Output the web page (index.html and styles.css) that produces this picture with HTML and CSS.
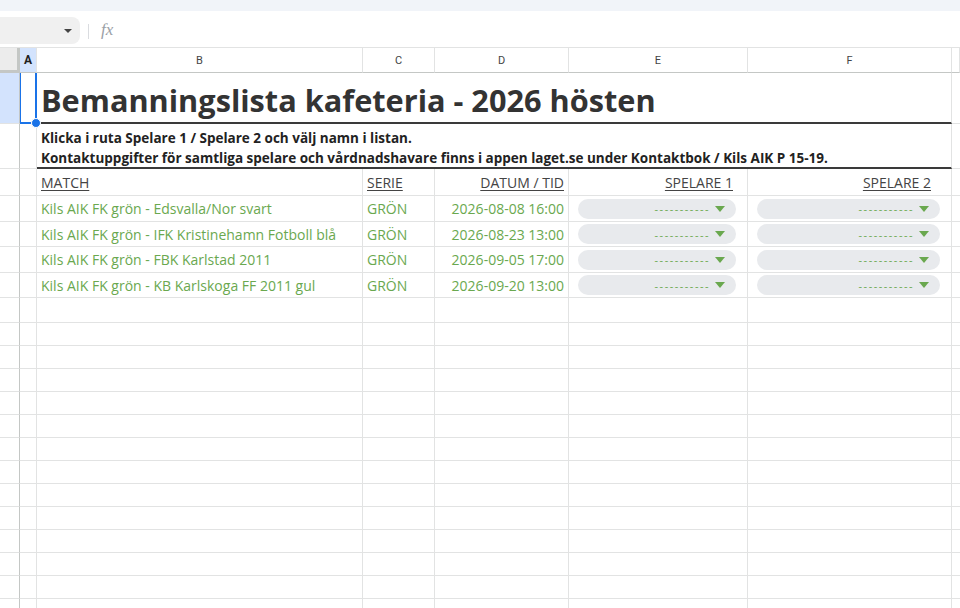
FILE: index.html
```html
<!DOCTYPE html>
<html lang="sv">
  <head>
    <meta charset="utf-8" />
    <title>Bemanningslista kafeteria</title>
    <link rel="stylesheet" href="styles.css">
  </head>

  <body>
    <div class="top_band"></div>

    <div class="formula_bar">
      <div class="name_box"><span class="name_caret"></span></div>
      <div class="bar_sep"></div>
      <div class="fx">fx</div>
    </div>

    <div class="sheet">
      <!-- column letters -->
      <div class="row col_heads">
        <div class="cell corner"></div>
        <div class="cell head head_sel">A</div>
        <div class="cell head">B</div>
        <div class="cell head">C</div>
        <div class="cell head">D</div>
        <div class="cell head">E</div>
        <div class="cell head">F</div>
        <div class="cell head"></div>
      </div>

      <div class="row r_title">
        <div class="cell rh rh_sel"></div>
        <div class="cell a1"><span class="handle"></span></div>
        <div class="cell span title thick">Bemanningslista kafeteria - 2026 hösten</div>
        <div class="cell"></div>
      </div>

      <div class="row r_info">
        <div class="cell rh"></div>
        <div class="cell"></div>
        <div class="cell span info thick">
          Klicka i ruta Spelare 1 / Spelare 2 och välj namn i listan.<br>
          Kontaktuppgifter för samtliga spelare och vårdnadshavare finns i appen laget.se under Kontaktbok / Kils AIK P 15-19.
        </div>
        <div class="cell"></div>
      </div>

      <div class="row r_head">
        <div class="cell rh"></div>
        <div class="cell"></div>
        <div class="cell label"><u>MATCH</u></div>
        <div class="cell label"><u>SERIE</u></div>
        <div class="cell label right"><u>DATUM / TID</u></div>
        <div class="cell label right pick_pad"><u>SPELARE 1</u></div>
        <div class="cell label right pick_pad2"><u>SPELARE 2</u></div>
        <div class="cell"></div>
      </div>

      <div class="row h26">
        <div class="cell rh"></div>
        <div class="cell"></div>
        <div class="cell data">Kils AIK FK grön - Edsvalla/Nor svart</div>
        <div class="cell data">GRÖN</div>
        <div class="cell data right">2026-08-08 16:00</div>
        <div class="cell pick"><div class="chip"><span class="dash">-----------</span><span class="caret"></span></div></div>
        <div class="cell pick"><div class="chip"><span class="dash">-----------</span><span class="caret"></span></div></div>
        <div class="cell"></div>
      </div>

      <div class="row h25">
        <div class="cell rh"></div>
        <div class="cell"></div>
        <div class="cell data">Kils AIK FK grön - IFK Kristinehamn Fotboll blå</div>
        <div class="cell data">GRÖN</div>
        <div class="cell data right">2026-08-23 13:00</div>
        <div class="cell pick"><div class="chip"><span class="dash">-----------</span><span class="caret"></span></div></div>
        <div class="cell pick"><div class="chip"><span class="dash">-----------</span><span class="caret"></span></div></div>
        <div class="cell"></div>
      </div>

      <div class="row h26">
        <div class="cell rh"></div>
        <div class="cell"></div>
        <div class="cell data">Kils AIK FK grön - FBK Karlstad 2011</div>
        <div class="cell data">GRÖN</div>
        <div class="cell data right">2026-09-05 17:00</div>
        <div class="cell pick"><div class="chip"><span class="dash">-----------</span><span class="caret"></span></div></div>
        <div class="cell pick"><div class="chip"><span class="dash">-----------</span><span class="caret"></span></div></div>
        <div class="cell"></div>
      </div>

      <div class="row h25">
        <div class="cell rh"></div>
        <div class="cell"></div>
        <div class="cell data">Kils AIK FK grön - KB Karlskoga FF 2011 gul</div>
        <div class="cell data">GRÖN</div>
        <div class="cell data right">2026-09-20 13:00</div>
        <div class="cell pick"><div class="chip"><span class="dash">-----------</span><span class="caret"></span></div></div>
        <div class="cell pick"><div class="chip"><span class="dash">-----------</span><span class="caret"></span></div></div>
        <div class="cell"></div>
      </div>

      <!-- empty rows -->
      <div class="row h25 empty"><div class="cell rh"></div><div class="cell"></div><div class="cell"></div><div class="cell"></div><div class="cell"></div><div class="cell"></div><div class="cell"></div><div class="cell"></div></div>
      <div class="row empty"><div class="cell rh"></div><div class="cell"></div><div class="cell"></div><div class="cell"></div><div class="cell"></div><div class="cell"></div><div class="cell"></div><div class="cell"></div></div>
      <div class="row empty"><div class="cell rh"></div><div class="cell"></div><div class="cell"></div><div class="cell"></div><div class="cell"></div><div class="cell"></div><div class="cell"></div><div class="cell"></div></div>
      <div class="row empty"><div class="cell rh"></div><div class="cell"></div><div class="cell"></div><div class="cell"></div><div class="cell"></div><div class="cell"></div><div class="cell"></div><div class="cell"></div></div>
      <div class="row empty"><div class="cell rh"></div><div class="cell"></div><div class="cell"></div><div class="cell"></div><div class="cell"></div><div class="cell"></div><div class="cell"></div><div class="cell"></div></div>
      <div class="row empty"><div class="cell rh"></div><div class="cell"></div><div class="cell"></div><div class="cell"></div><div class="cell"></div><div class="cell"></div><div class="cell"></div><div class="cell"></div></div>
      <div class="row empty"><div class="cell rh"></div><div class="cell"></div><div class="cell"></div><div class="cell"></div><div class="cell"></div><div class="cell"></div><div class="cell"></div><div class="cell"></div></div>
      <div class="row empty"><div class="cell rh"></div><div class="cell"></div><div class="cell"></div><div class="cell"></div><div class="cell"></div><div class="cell"></div><div class="cell"></div><div class="cell"></div></div>
      <div class="row empty"><div class="cell rh"></div><div class="cell"></div><div class="cell"></div><div class="cell"></div><div class="cell"></div><div class="cell"></div><div class="cell"></div><div class="cell"></div></div>
      <div class="row empty"><div class="cell rh"></div><div class="cell"></div><div class="cell"></div><div class="cell"></div><div class="cell"></div><div class="cell"></div><div class="cell"></div><div class="cell"></div></div>
      <div class="row empty"><div class="cell rh"></div><div class="cell"></div><div class="cell"></div><div class="cell"></div><div class="cell"></div><div class="cell"></div><div class="cell"></div><div class="cell"></div></div>
      <div class="row empty"><div class="cell rh"></div><div class="cell"></div><div class="cell"></div><div class="cell"></div><div class="cell"></div><div class="cell"></div><div class="cell"></div><div class="cell"></div></div>
      <div class="row empty"><div class="cell rh"></div><div class="cell"></div><div class="cell"></div><div class="cell"></div><div class="cell"></div><div class="cell"></div><div class="cell"></div><div class="cell"></div></div>
      <div class="row empty"><div class="cell rh"></div><div class="cell"></div><div class="cell"></div><div class="cell"></div><div class="cell"></div><div class="cell"></div><div class="cell"></div><div class="cell"></div></div>
    </div>
  </body>
</html>
```

FILE: styles.css
```css
html, body
{
  margin: 0;
  padding: 0;
  background-color: #fff;
  width: 960px;
  height: 608px;
  overflow: hidden;
  font-family: "Open Sans", sans-serif;
}
.top_band
{
  height: 11px;
  background-color: #f1f4f9;
}

/* name box + fx */
.formula_bar
{
  height: 36px;
  box-sizing: border-box;
  padding-top: 6px;
  display: flex;
  align-items: flex-start;
}
.name_box
{
  width: 80px;
  height: 27px;
  background-color: #f0f0f0;
  border-radius: 0 8px 8px 0;
  display: flex;
  align-items: center;
  justify-content: flex-end;
  padding-right: 8px;
  box-sizing: border-box;
}
.name_caret
{
  width: 0;
  height: 0;
  border-left: 4px solid transparent;
  border-right: 4px solid transparent;
  border-top: 4px solid #444;
}
.bar_sep
{
  width: 1px;
  height: 15px;
  margin: 7px 0 0 8px;
  background-color: #dadce0;
}
.fx
{
  margin: 3px 0 0 12px;
  font-family: "Liberation Serif", serif;
  font-style: italic;
  font-size: 17px;
  color: #9aa0a6;
}

/* grid */
.row
{
  display: grid;
  grid-template-columns: 20px 17px 326px 72px 134px 179px 204px 1fr;
  height: 23px;
}
.cell
{
  box-sizing: border-box;
  border-right: 1px solid #e2e3e3;
  border-bottom: 1px solid #e2e3e3;
  display: flex;
  align-items: flex-end;
  padding: 0 4px 3px 4px;
  white-space: nowrap;
  overflow: hidden;
  min-width: 0;
}
.span
{
  grid-column: 3 / 8;
}
.right
{
  justify-content: flex-end;
}
.h26 { height: 26px; }
.h25 { height: 25px; }

.col_heads
{
  height: 26px;
  border-top: 1px solid #e2e3e3;
  box-sizing: border-box;
}
.head
{
  align-items: center;
  justify-content: center;
  padding: 0;
  font-family: Roboto, sans-serif;
  font-size: 11px;
  color: #444;
  border-bottom-color: #c4c7c5;
}
.head_sel
{
  background-color: #d3e3fd;
  color: #1f1f1f;
  font-weight: bold;
  font-size: 12px;
}
.corner
{
  background-color: #ececec;
  border-right: 3px solid #c4c7c5;
  border-bottom: 3px solid #c4c7c5;
}
.rh
{
  border-right: 1px solid #c4c7c5;
  padding: 0;
}
.rh_sel
{
  background-color: #d3e3fd;
}

/* selected A1 */
.a1
{
  position: relative;
  overflow: visible;
  border-right: 2px solid #1a73e8;
  border-bottom: 2px solid #1a73e8;
  border-left: 1px solid #1a73e8;
}
.handle
{
  position: absolute;
  right: -6px;
  bottom: -6px;
  width: 8px;
  height: 8px;
  border-radius: 50%;
  background-color: #1a73e8;
  border: 1px solid #fff;
  z-index: 2;
}

.r_title
{
  height: 51px;
}
.title
{
  font-size: 30.7px;
  font-weight: bold;
  color: #333;
  padding-bottom: 0;
  line-height: 44px;
}
.thick
{
  border-bottom: 2px solid #3a3a3a;
}
.r_info
{
  height: 45px;
}
.info
{
  display: block;
  padding-top: 4px;
  font-size: 13.5px;
  font-weight: bold;
  line-height: 20px;
  color: #222;
}
.r_head
{
  height: 27px;
}
.label
{
  font-size: 14px;
  color: #444;
  padding-bottom: 3px;
}
.label u
{
  text-underline-offset: 2px;
}
.pick_pad
{
  padding-right: 14px;
}
.pick_pad2
{
  padding-right: 20px;
}
.data
{
  font-size: 14px;
  color: #6aa84f;
  align-items: center;
  padding-bottom: 0;
}

/* dropdown chips */
.pick
{
  align-items: center;
  padding: 0 11px 0 9px;
}
.chip
{
  flex: 1;
  height: 20px;
  border-radius: 10px;
  background-color: #e8eaed;
  display: flex;
  align-items: center;
  justify-content: flex-end;
  gap: 5px;
  padding-right: 11px;
}
.dash
{
  font-size: 11px;
  letter-spacing: 1.5px;
  color: #6aa84f;
}
.caret
{
  width: 0;
  height: 0;
  border-left: 5px solid transparent;
  border-right: 5px solid transparent;
  border-top: 6px solid #6aa84f;
}
```
